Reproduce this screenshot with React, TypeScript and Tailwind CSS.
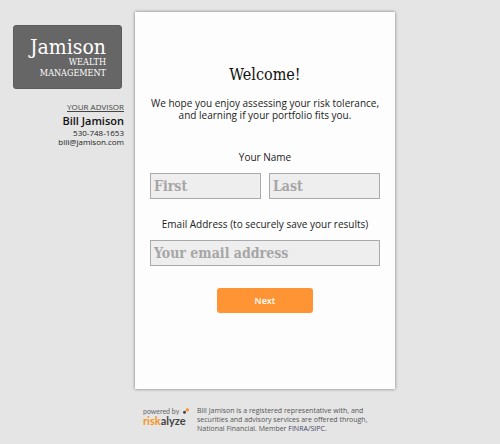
import type { ComponentProps } from 'react'
import clsx from 'clsx'

const SANS = "font-['Open_Sans','Noto_Sans',sans-serif]"
const SLAB = "font-['DejaVu_Serif_Condensed','DejaVu_Serif',serif]"

const ADVISOR = {
  name: 'Bill Jamison',
  phone: '530-748-1653',
  email: 'bill@jamison.com',
}

function FirmLogo() {
  return (
    <div
      className={clsx(
        SLAB,
        'ml-[13px] mr-0.5 h-16 rounded-[3px] border border-[#5c5c5c] bg-[#666] pr-[15px] pt-[11px] text-right text-white',
      )}
    >
      <p className="text-[21px] leading-5">Jamison</p>
      <p className="text-[9px] leading-[11px]">
        WEALTH
        <br />
        MANAGEMENT
      </p>
    </div>
  )
}

function Advisor() {
  return (
    <div className="mt-3 text-right text-[8px] leading-[9px] text-[#222]">
      <h2 className="text-[8px] leading-3 text-[#444] underline">YOUR ADVISOR</h2>
      <p className="mt-px text-[11px] font-semibold leading-[14px] text-[#111]">{ADVISOR.name}</p>
      <p>{ADVISOR.phone}</p>
      <a href={`mailto:${ADVISOR.email}`} className="block">{ADVISOR.email}</a>
    </div>
  )
}

function TextField({ className, ...props }: ComponentProps<'input'>) {
  return (
    <input
      className={clsx(
        SLAB,
        'h-[26px] w-full min-w-0 border border-[#aaa] bg-[#eee] px-[3px] text-[14px] font-bold text-[#333] placeholder:text-[#a6a6a6]',
        className,
      )}
      {...props}
    />
  )
}

function RiskalyzeLogo() {
  return (
    <div className="relative w-[46px] shrink-0 pt-px font-['Lato',sans-serif]">
      <p className="text-[7px] leading-[9px] text-[#666]">powered by</p>
      <p className="text-[11px] font-bold leading-[10px] text-[#444]">
        <span className="text-[#f7941e]">risk</span>alyze
      </p>
      <svg className="absolute right-0 top-0.5 h-1.5 w-1.5" viewBox="0 0 6 6" aria-hidden="true">
        <circle cx="1.5" cy="4.2" r="1.5" fill="#444" />
        <circle cx="4.3" cy="1.9" r="1.7" fill="#f7941e" />
      </svg>
    </div>
  )
}

export default function App() {
  return (
    <div className={clsx(SANS, 'flex min-h-screen gap-[11px] bg-[#e5e5e5] pr-[105px] pt-3')}>
      <aside className="w-[124px] shrink-0 pt-[13px]">
        <FirmLogo />
        <Advisor />
      </aside>

      <div className="min-w-0 flex-1">
        <main className="bg-[#fdfdfd] px-[15px] pb-[76px] pt-[53px] text-center text-[10px] leading-3 text-[#222] shadow-[0_0_3px_rgba(0,0,0,0.5)]">
          <h1 className={clsx(SLAB, 'text-[16px] leading-5 text-[#111]')}>Welcome!</h1>
          <p className="mt-3">
            We hope you enjoy assessing your risk tolerance,
            <br />
            and learning if your portfolio fits you.
          </p>

          <form onSubmit={e => e.preventDefault()}>
            <fieldset className="mt-[30px]">
              <legend className="w-full">Your Name</legend>
              <div className="mt-[10px] grid grid-cols-2 gap-2">
                <TextField placeholder="First" aria-label="First name" autoComplete="given-name" />
                <TextField placeholder="Last" aria-label="Last name" autoComplete="family-name" />
              </div>
            </fieldset>

            <label htmlFor="email" className="mt-[19px] block">
              Email Address (to securely save your results)
            </label>
            <TextField id="email" type="email" className="mt-[10px]" placeholder="Your email address" />

            <button
              type="submit"
              className="mt-[22px] h-[25px] w-24 rounded-[3px] bg-[#ff9434] text-[9px] font-semibold text-white"
            >
              Next
            </button>
          </form>
        </main>

        <footer className="flex gap-2 pl-2 pt-[17px]">
          <RiskalyzeLogo />
          <p className="whitespace-nowrap text-[7px] leading-[9px] text-[#555]">
            Bill Jamison is a registered representative with, and
            <br />
            securities and advisory services are offered through,
            <br />
            National Financial. Member <a href="#finra" className="text-[#446]">FINRA/SIPC</a>.
          </p>
        </footer>
      </div>
    </div>
  )
}
